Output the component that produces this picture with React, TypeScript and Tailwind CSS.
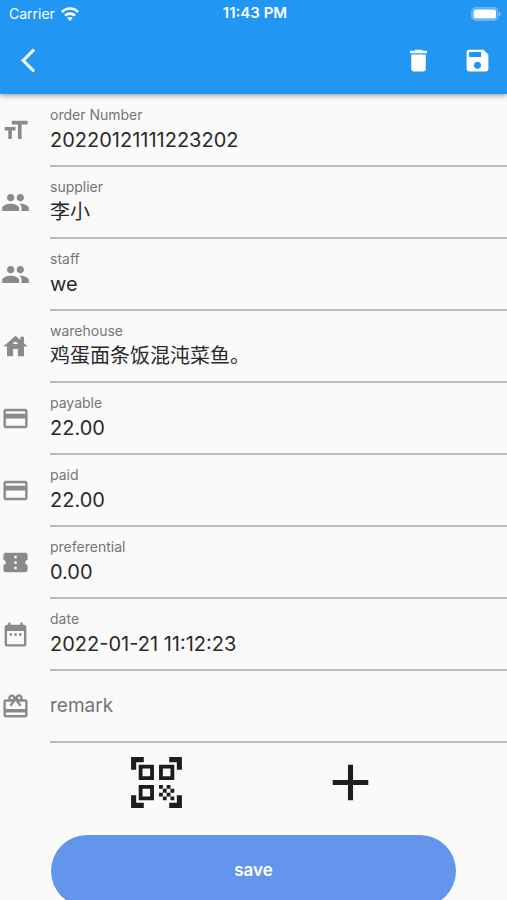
import React, { useState } from "react";
import type { IconType } from "react-icons";
import {
  MdAdd,
  MdArrowBackIos,
  MdCardGiftcard,
  MdConfirmationNumber,
  MdDateRange,
  MdDelete,
  MdFormatSize,
  MdHouse,
  MdPayment,
  MdPeople,
  MdQrCodeScanner,
  MdSave,
} from "react-icons/md";

interface Field {
  name: string;
  label: string;
  icon: IconType;
}

const FIELDS: Field[] = [
  { name: "orderNumber", label: "order Number", icon: MdFormatSize },
  { name: "supplier", label: "supplier", icon: MdPeople },
  { name: "staff", label: "staff", icon: MdPeople },
  { name: "warehouse", label: "warehouse", icon: MdHouse },
  { name: "payable", label: "payable", icon: MdPayment },
  { name: "paid", label: "paid", icon: MdPayment },
  { name: "preferential", label: "preferential", icon: MdConfirmationNumber },
  { name: "date", label: "date", icon: MdDateRange },
  { name: "remark", label: "remark", icon: MdCardGiftcard },
];

const INITIAL: Record<string, string> = {
  orderNumber: "20220121111223202",
  supplier: "李小",
  staff: "we",
  warehouse: "鸡蛋面条饭混沌菜鱼。",
  payable: "22.00",
  paid: "22.00",
  preferential: "0.00",
  date: "2022-01-21 11:12:23",
  remark: "",
};

const WifiIcon = () => (
  <svg viewBox="0 0 18 14" className="h-[14px] w-[18px]" fill="none" stroke="currentColor" strokeWidth="2.6">
    <path d="M.9 5.1C5.4.3 12.6.3 17.1 5.1" />
    <path d="M4 8.6c2.8-2.7 7.2-2.7 10 0" />
    <path d="M9 14 6.1 11c1.6-1.5 4.2-1.5 5.8 0z" fill="currentColor" stroke="none" />
  </svg>
);

const BatteryIcon = () => (
  <svg viewBox="0 0 30 14" className="h-[14px] w-[30px]">
    <rect x="0.8" y="0.8" width="26" height="12.4" rx="4" fill="#fff" fillOpacity="0.15" stroke="#fff" strokeOpacity="0.3" strokeWidth="1.4" />
    <rect x="2.6" y="2.4" width="22.4" height="9.2" rx="2.2" fill="#fff" />
    <path d="M28 4.8c2 .7 2 3.7 0 4.4z" fill="#fff" fillOpacity="0.45" />
  </svg>
);

const StatusBar = () => (
  <div className="grid h-[27px] grid-cols-3 items-center pl-[9px] pr-[6px] text-[14px]">
    <div className="flex items-center gap-[6px]">
      <span>Carrier</span>
      <WifiIcon />
    </div>
    <span className="text-center text-[15px] font-semibold">11:43 PM</span>
    <div className="flex justify-end">
      <BatteryIcon />
    </div>
  </div>
);

interface FieldRowProps {
  field: Field;
  value: string;
  onChange: (value: string) => void;
}

const FieldRow: React.FC<FieldRowProps> = ({ field, value, onChange }) => {
  const Icon = field.icon;

  return (
    <div className="flex h-[72px] items-center pl-px">
      <Icon className="mb-[2px] size-[29px] shrink-0 text-[#8a8a8a]" />
      <div className="relative ml-5 flex h-full min-w-0 flex-1 flex-col border-b-2 border-[#bababa] pt-[10px]">
        {/* the label sits in the middle of the row until there is a value */}
        <label
          htmlFor={field.name}
          className={
            value === ""
              ? "absolute inset-0 flex items-center text-[19px] text-[#757575]"
              : "text-[14px] leading-[20px] text-[#757575]"
          }
        >
          {field.label}
        </label>
        <input
          id={field.name}
          value={value}
          onChange={(e) => onChange(e.target.value)}
          className="h-[30px] w-full bg-transparent text-[20px] text-[#2a2a2a] outline-none"
        />
      </div>
    </div>
  );
};

const App: React.FC = () => {
  const [values, setValues] = useState(INITIAL);

  return (
    <div className="min-h-screen overflow-hidden bg-[#fafafa] font-['Inter','Noto_Sans_CJK_SC',sans-serif]">
      <header className="bg-[#2196f3] text-white shadow-[0_2px_5px_rgba(0,0,0,0.35)]">
        <StatusBar />
        <div className="flex h-[67px] items-center">
          <button type="button" aria-label="Back" className="pl-[21px]">
            <MdArrowBackIos className="size-[29px]" />
          </button>
          <button type="button" aria-label="Delete" className="ml-auto flex w-[59px] justify-center">
            <MdDelete className="size-[29px]" />
          </button>
          <button type="button" aria-label="Save order" className="flex w-[59px] justify-center">
            <MdSave className="size-[29px]" />
          </button>
        </div>
      </header>

      <form className="pt-px" onSubmit={(e) => e.preventDefault()}>
        {FIELDS.map((field) => (
          <FieldRow
            key={field.name}
            field={field}
            value={values[field.name]}
            onChange={(value) => setValues({ ...values, [field.name]: value })}
          />
        ))}

        <div className="flex justify-evenly pt-px text-[#1d1d1d]">
          <button type="button" aria-label="Scan code" className="p-2">
            <MdQrCodeScanner className="size-[61px]" />
          </button>
          <button type="button" aria-label="Add item" className="p-2">
            <MdAdd className="size-[61px]" />
          </button>
        </div>

        <div className="px-[51px] pt-[14px]">
          <button
            type="submit"
            className="h-[72px] w-full rounded-full bg-[#6495ed] text-[17px] font-semibold text-white"
          >
            save
          </button>
        </div>
      </form>
    </div>
  );
};

export default App;
